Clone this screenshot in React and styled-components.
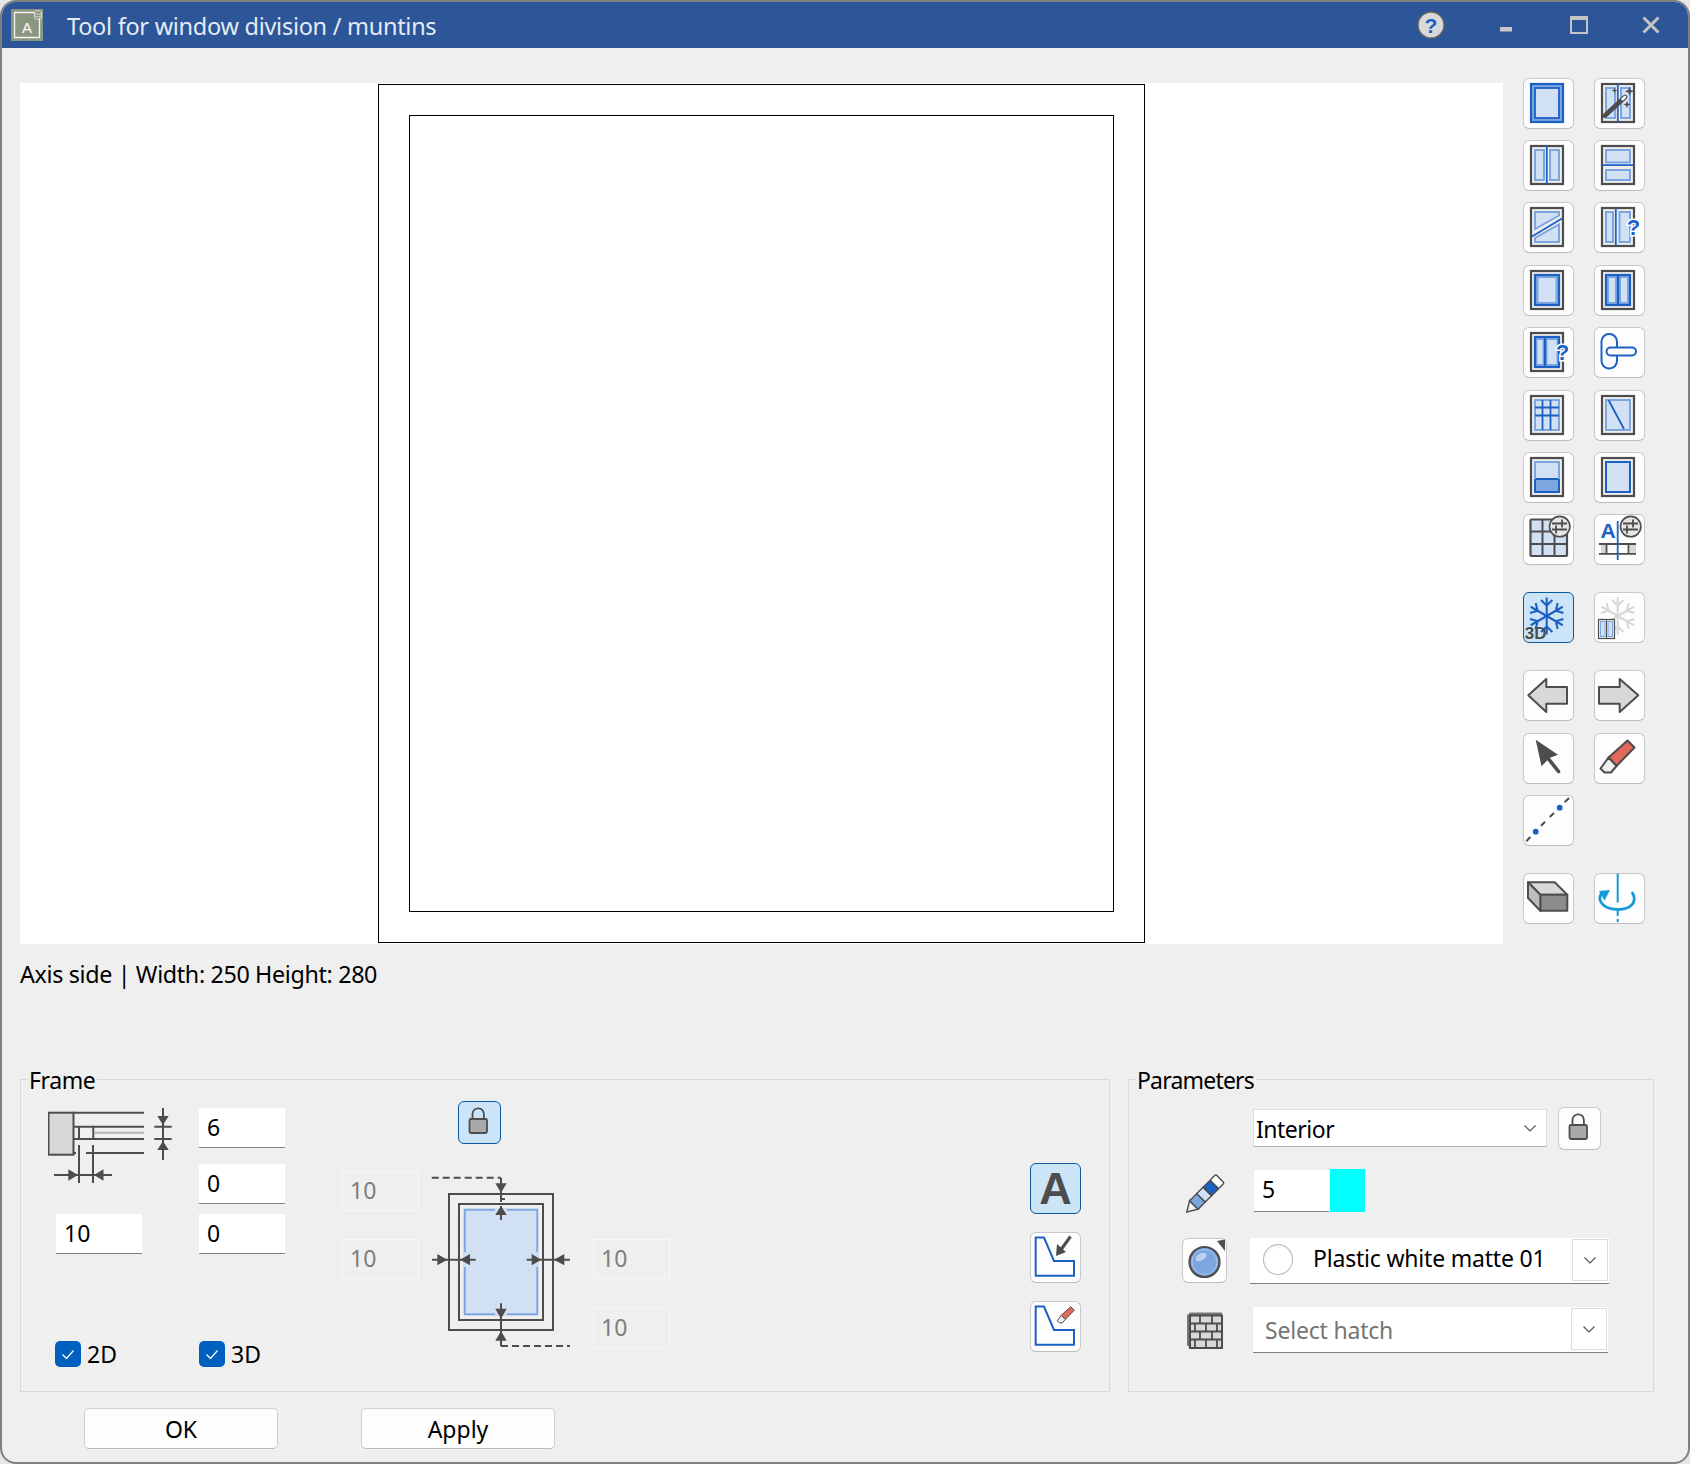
import React from 'react'
import styled, { createGlobalStyle } from 'styled-components'

const BLUE = '#1d60c4'
const MID = '#7ca6e0'
const LIGHT = '#d2e0f3'
const DARK = '#4d4d4d'
const GREY = '#d8d8d8'
const UI_FONT = '"Noto Sans", "Open Sans", sans-serif'

const Global = createGlobalStyle`
  html, body { margin: 0; padding: 0; background: #e6e6e6; }
  body { font-family: ${UI_FONT}; color: #000; }
`

const Window = styled.div`
  box-sizing: border-box;
  width: 1690px;
  height: 1464px;
  background: #efefef;
  border: 2px solid #808080;
  border-radius: 16px;
  overflow: hidden;
  display: flex;
  flex-direction: column;
`

const TitleBar = styled.header`
  height: 46px;
  flex: none;
  background: #2c5697;
  display: flex;
  align-items: center;
  padding-left: 9px;
  color: #e4ebf5;
`

const Title = styled.div`
  font-size: 23.5px;
  margin: 2px 0 0 24px;
  letter-spacing: -0.28px;
  flex: 1;
`

const TitleGlyph = styled.div`
  margin-left: ${p => p.$gap}px;
  margin-right: ${p => p.$end || 0}px;
`

const Content = styled.main`
  flex: 1;
  display: flex;
  flex-direction: column;
  padding: 30px 0 0 18px;
`

const TopRow = styled.div`
  display: flex;
  align-items: flex-start;
  gap: 20px;
  height: 866px;
`

const Canvas = styled.div`
  width: 1483px;
  height: 861px;
  margin-top: 5px;
  background: #fff;
  display: flex;
  justify-content: center;
`

const OuterSheet = styled.div`
  box-sizing: border-box;
  width: 767px;
  height: 859px;
  margin-top: 1px;
  margin-left: -1px;
  border: 1px solid #000;
  display: flex;
  align-items: center;
  justify-content: center;
`

const InnerSheet = styled.div`
  box-sizing: border-box;
  width: 705px;
  height: 797px;
  border: 1px solid #000;
`

const ToolGrid = styled.div`
  display: grid;
  grid-template-columns: 51px 51px;
  column-gap: 20px;
  grid-template-rows: 62px 62px 63px 62px 63px 62px 62px 78px 78px 63px 62px 78px 51px;
  align-items: start;
`

const IconButton = styled.button`
  box-sizing: border-box;
  width: ${p => p.$size || 51}px;
  height: ${p => p.$size || 51}px;
  padding: 0;
  display: block;
  border: 1px solid ${p => (p.$active ? '#0a5aa0' : '#c8c8c8')};
  border-bottom-color: ${p => (p.$active ? '#0a5aa0' : '#bcbcbc')};
  border-radius: 6px;
  background: ${p => (p.$active ? '#cce4f7' : '#fdfdfd')};
  overflow: visible;
  svg { display: block; margin: -1px; overflow: visible; }
`

const StatusLine = styled.div`
  font-size: 23.3px;
  letter-spacing: -0.35px;
  line-height: 32px;
  margin-top: 14px;
  height: 121px;
`

const Panels = styled.div`
  display: flex;
  gap: 18px;
`

const Panel = styled.section`
  position: relative;
  box-sizing: border-box;
  width: ${p => p.$width}px;
  height: 313px;
  border: 1px solid #d9d9d9;
  display: flex;
  padding-top: ${p => p.$top}px;
`

const Legend = styled.div`
  position: absolute;
  left: 6px;
  top: -15px;
  padding: 0 2px;
  background: #efefef;
  font-size: 23px;
  letter-spacing: ${p => p.$tracking}px;
  line-height: 30px;
`

const FieldsColumn = styled.div`
  display: grid;
  grid-template-columns: 151px 86px;
  grid-template-rows: 56px 50px 126px 26px;
  align-items: start;
  margin-left: 27px;
  padding-top: 7px;
  height: 258px;
`

const ProfileSlot = styled.div`
  grid-column: 1;
  grid-row: 1 / span 2;
`

const Field = styled.div`
  box-sizing: border-box;
  width: ${p => p.$width || 86}px;
  height: ${p => p.$height || 40}px;
  margin-left: ${p => p.$left || 0}px;
  background: #fff;
  border-bottom: 1px solid #808080;
  font-size: 23px;
  line-height: 38px;
  padding-left: 8px;
  grid-column: ${p => p.$col};
  grid-row: ${p => p.$row};
`

const MutedField = styled.div`
  box-sizing: border-box;
  width: 77px;
  height: 40px;
  border: 1px solid #f8f8f8;
  font-size: 23px;
  line-height: 36px;
  padding-left: 7px;
  color: #7d7d7d;
  grid-column: ${p => p.$col};
  grid-row: ${p => p.$row};
`

const Check = styled.label`
  display: flex;
  align-items: center;
  gap: 6px;
  font-size: 23px;
  line-height: 26px;
  margin-left: ${p => p.$left || 0}px;
  margin-top: 1px;
  grid-column: ${p => p.$col};
  grid-row: 4;
`

const CheckBox = styled.span`
  width: 26px;
  height: 26px;
  border-radius: 5px;
  background: #0060c0;
  display: flex;
  align-items: center;
  justify-content: center;
`

const OffsetColumn = styled.div`
  display: grid;
  grid-template-columns: 88px 163px 77px;
  grid-template-rows: 70px 68px 69px 40px;
  align-items: start;
  margin-left: 57px;
  height: 247px;
`

const LockSlot = styled.div`
  grid-column: 2;
  grid-row: 1;
  margin-left: 28px;
`

const DiagramSlot = styled.div`
  grid-column: 2;
  grid-row: 2 / span 3;
  margin-top: 4px;
`

const TextStyleColumn = styled.div`
  display: flex;
  flex-direction: column;
  gap: 18px;
  margin-left: auto;
  margin-right: 28px;
  padding-top: 62px;
`

const BoldA = styled.span`
  display: block;
  font-family: "Liberation Sans", sans-serif;
  font-weight: 700;
  font-size: 45px;
  line-height: 47px;
  color: ${DARK};
  text-align: center;
`

const ParamsGrid = styled.div`
  display: grid;
  grid-template-columns: 68px 360px;
  grid-template-rows: 62px 69px 69px 46px;
  align-items: start;
  margin-left: 53px;
`

const LayerRow = styled.div`
  display: flex;
  align-items: flex-start;
  gap: 11px;
  margin-left: 3px;
  grid-column: 2;
  grid-row: 1;
`

const Select = styled.div`
  box-sizing: border-box;
  width: 294px;
  height: 38px;
  margin-top: 2px;
  background: #fff;
  border: 1px solid #dedede;
  border-bottom-color: #b4b4b4;
  display: flex;
  align-items: center;
  justify-content: space-between;
  font-size: 23px;
  line-height: 38px;
  letter-spacing: -0.5px;
  padding: 1px 9px 0 2px;
`

const PenRow = styled.div`
  display: flex;
  margin: 1px 0 0 4px;
  grid-column: 2;
  grid-row: 2;
`

const ColorChip = styled.div`
  width: 35px;
  height: 43px;
  margin: -1px 0 0 1px;
  background: #00ffff;
`

const Picker = styled.div`
  box-sizing: border-box;
  width: ${p => p.$width}px;
  height: 46px;
  margin-left: ${p => p.$left || 0}px;
  background: #fff;
  border-bottom: 1px solid #808080;
  display: flex;
  align-items: center;
  font-size: 23px;
  letter-spacing: -0.2px;
  color: ${p => (p.$muted ? '#757575' : '#000')};
  padding-left: ${p => p.$pad}px;
  grid-column: 2;
  grid-row: ${p => p.$row};
`

const PickerLabel = styled.span`
  margin-bottom: 6px;
`

const PickerArrow = styled.div`
  box-sizing: border-box;
  width: 36px;
  height: 42px;
  margin-left: auto;
  margin-right: 1px;
  margin-bottom: 1px;
  border: 1px solid #dcdcdc;
  display: flex;
  align-items: center;
  justify-content: center;
`

const Swatch = styled.span`
  width: 30px;
  height: 31px;
  margin: 0 20px 2px 0;
  border-radius: 50%;
  border: 1px solid #b8b8b8;
  box-sizing: border-box;
  background: radial-gradient(circle at 55% 55%, #fff 55%, #e4e4e4 100%);
`

const IconSlot = styled.div`
  margin-left: ${p => p.$left || 0}px;
  margin-top: ${p => p.$top || 0}px;
  grid-column: 1;
  grid-row: ${p => p.$row};
`

const Footer = styled.footer`
  display: flex;
  gap: 83px;
  margin: 16px 0 0 64px;
`

const DialogButton = styled.button`
  box-sizing: border-box;
  width: 194px;
  height: 41px;
  padding: 0;
  background: #fdfdfd;
  border: 1px solid #d0d0d0;
  border-bottom-color: #b8b8b8;
  border-radius: 5px;
  font-family: ${UI_FONT};
  font-size: 23px;
  line-height: 38px;
  color: #000;
`

// ---- small drawings

const Tool = ({ children, size = 51 }) => (
  <svg width={size} height={size} viewBox={`0 0 ${size} ${size}`}>{children}</svg>
)

const Box = ({ x = 8, y = 6, w = 32, h = 38 }) => (
  <rect x={x} y={y} width={w} height={h} fill="#eee" stroke={DARK} strokeWidth="2.2" />
)

const Pane = ({ x, y, w, h, stroke = MID, fill = LIGHT, sw = 2 }) => (
  <rect x={x} y={y} width={w} height={h} fill={fill} stroke={stroke} strokeWidth={sw} />
)

const Quest = ({ x = 39.5, y = 33 }) => (
  <text x={x} y={y} textAnchor="middle" fontFamily="Liberation Sans, sans-serif" fontWeight="700" fontSize="22" fill={BLUE} stroke="#fff" strokeWidth="3" paintOrder="stroke">?</text>
)

const Sliders = () => (
  <g>
    <circle cx="36.7" cy="12.6" r="10.2" fill="#e6e6e6" stroke={DARK} strokeWidth="1.6" />
    <path d="M29 9.5h15M29 15.5h15M39 5.5v8M33 11.5v8" stroke={DARK} strokeWidth="1.8" fill="none" />
  </g>
)

const Flake = ({ color, strokeW = 2.1 }) => {
  const arm = 'M23.7 24V5.5M18 8l5.700 5.500 5.700-5.500'
  return (
    <g stroke={color} strokeWidth={strokeW} fill="none">
      {[0, 60, 120, 180, 240, 300].map(a => (
        <path key={a} d={arm} transform={`rotate(${a} 23.7 24)`} />
      ))}
    </g>
  )
}

const Arrow = ({ points }) => <polygon points={points} fill={DARK} />

const windowIcons = [
  <Tool>
    <rect x="8" y="6" width="32" height="38" fill={MID} stroke={BLUE} strokeWidth="2.2" />
    <rect x="12" y="10" width="24" height="30" fill={LIGHT} stroke={BLUE} strokeWidth="1.8" />
  </Tool>,
  <Tool>
    <Box />
    <Pane x="12" y="10" w="9" h="30" />
    <Pane x="27" y="10" w="9" h="30" />
    <path d="M23.8 6v38" stroke={BLUE} strokeWidth="1.8" />
    <path d="M11 37.5L31 19" stroke={DARK} strokeWidth="4.8" strokeLinecap="round" />
    <path d="M28.5 21.2l2.500-2.300" stroke="#fff" strokeWidth="2.6" strokeLinecap="round" />
    <path d="M35.5 8.5l1.2 3.6 3.6 1.2-3.6 1.2-1.2 3.6-1.2-3.6-3.6-1.2 3.6-1.2zM33 23l1 2.6 2.6 1-2.6 1-1 2.6-1-2.6-2.6-1 2.6-1zM20.5 9.5l.7 2.3 2.3.7-2.3.7-.7 2.3-.7-2.3-2.3-.7 2.3-.7z" fill={DARK} />
  </Tool>,
  <Tool>
    <Box />
    <Pane x="12" y="10" w="9" h="30" />
    <Pane x="27" y="10" w="9" h="30" />
    <path d="M23.8 6v38" stroke={BLUE} strokeWidth="1.8" />
  </Tool>,
  <Tool>
    <Box />
    <Pane x="12" y="10" w="24" h="12.5" />
    <Pane x="12" y="30" w="24" h="10" />
    <path d="M8 25.2h32" stroke={BLUE} strokeWidth="1.8" />
  </Tool>,
  <Tool>
    <Box />
    <polygon points="12,10 36,10 36,13.5 12,27" fill={LIGHT} stroke={MID} strokeWidth="2" />
    <polygon points="36,22.5 36,40 12,40 12,36" fill={LIGHT} stroke={MID} strokeWidth="2" />
    <path d="M9 34.5L39 16.5" stroke={BLUE} strokeWidth="1.8" />
  </Tool>,
  <Tool>
    <Box />
    <Pane x="12" y="10" w="7" h="30" />
    <Pane x="25.5" y="10" w="10.5" h="30" />
    <path d="M21.8 6v38" stroke={BLUE} strokeWidth="1.8" />
    <Quest />
  </Tool>,
  <Tool>
    <Box />
    <rect x="12" y="10" width="24" height="30" fill={MID} stroke={BLUE} strokeWidth="2.2" />
    <rect x="15.5" y="13" width="17" height="24" fill={LIGHT} />
  </Tool>,
  <Tool>
    <Box />
    <rect x="12" y="10" width="24" height="30" fill={MID} stroke={BLUE} strokeWidth="2.2" />
    <rect x="15" y="13" width="6" height="24" fill={LIGHT} />
    <rect x="27" y="13" width="6" height="24" fill={LIGHT} />
    <path d="M24 10v30" stroke={BLUE} strokeWidth="2.2" />
  </Tool>,
  <Tool>
    <Box />
    <rect x="12" y="10" width="24" height="30" fill={MID} stroke={BLUE} strokeWidth="2.2" />
    <rect x="14.5" y="13" width="5" height="24" fill={LIGHT} />
    <rect x="24.5" y="13" width="9" height="24" fill={LIGHT} />
    <path d="M22 10v30" stroke={BLUE} strokeWidth="2.2" />
    <Quest />
  </Tool>,
  <Tool>
    <rect x="7.5" y="7" width="15.5" height="34.5" rx="7.5" fill="#fdfdfd" stroke={BLUE} strokeWidth="2" />
    <rect x="12.5" y="20.5" width="29.5" height="8" rx="4" fill="#fdfdfd" stroke={BLUE} strokeWidth="2" />
  </Tool>,
  <Tool>
    <Box />
    <Pane x="12" y="10" w="24" h="30" />
    <path d="M19.5 10v30M27.5 10v30M12 17.5h24M12 25.5h24" stroke={BLUE} strokeWidth="1.8" />
  </Tool>,
  <Tool>
    <Box />
    <Pane x="12" y="10" w="24" h="30" />
    <path d="M14.5 10L30 39" stroke={BLUE} strokeWidth="1.8" />
  </Tool>,
  <Tool>
    <Box />
    <Pane x="12" y="10" w="24" h="17" />
    <rect x="12" y="27" width="24" height="13" fill={MID} stroke={BLUE} strokeWidth="2" />
    <path d="M12 10v17M36 10v17" stroke={MID} strokeWidth="2" />
  </Tool>,
  <Tool>
    <Box />
    <Pane x="12" y="10" w="24" h="30" stroke={BLUE} />
  </Tool>,
  <Tool>
    <rect x="7.5" y="5.5" width="36.5" height="36.5" rx="1" fill={LIGHT} stroke={DARK} strokeWidth="2.2" />
    <path d="M19.5 5.5v36.5M31.5 5.5v36.5M7.5 17.5h36.5M7.5 30h36.5" stroke={DARK} strokeWidth="2" />
    <Sliders />
  </Tool>,
  <Tool>
    <rect x="7" y="30" width="35" height="10" fill={GREY} />
    <rect x="12" y="30" width="24" height="10" fill="#fdfdfd" />
    <path d="M5 30h37M5 39.8h37M12.5 30v10M34.5 30v10" stroke={DARK} strokeWidth="1.8" />
    <text x="14" y="24" textAnchor="middle" fontFamily="Liberation Sans, sans-serif" fontWeight="700" fontSize="21" fill={BLUE}>A</text>
    <path d="M23.7 7v39" stroke={BLUE} strokeWidth="1.8" />
    <Sliders />
  </Tool>,
]

const freeze3d = (
  <Tool>
    <Flake color={BLUE} />
    <text x="1.700" y="47" fontFamily="Liberation Sans, sans-serif" fontWeight="700" fontSize="17" fill={DARK}>3D</text>
  </Tool>
)

const freezeWindow = (
  <Tool>
    <Flake color="#d8d8d8" />
    <rect x="4.5" y="27.5" width="16" height="19" fill="#eee" stroke={DARK} strokeWidth="1.2" />
    <rect x="6.5" y="29.5" width="4.5" height="15" fill={LIGHT} stroke={MID} strokeWidth="1" />
    <rect x="14" y="29.5" width="4.5" height="15" fill={LIGHT} stroke={MID} strokeWidth="1" />
    <path d="M12.5 27.5v19" stroke={DARK} strokeWidth="1" />
  </Tool>
)

const eraser = (
  <g strokeLinejoin="round">
    <polygon points="33.5,7.5 40.5,14.5 22.5,33 14.5,24.5" fill="#e2695a" stroke={DARK} strokeWidth="2" />
    <path d="M14.5 24.5L22.5 33L17 39.5H10.5L6.5 35.5z" fill="#eee" stroke={DARK} strokeWidth="2" />
  </g>
)

const navIcons = [
  <Tool><polygon points="5.3,25.3 23.3,9 23.3,17 44,17 44,33.7 23.3,33.7 23.3,42" fill={GREY} stroke={DARK} strokeWidth="2" strokeLinejoin="round" /></Tool>,
  <Tool><polygon points="5,17 25.7,17 25.7,9 44.3,25.3 25.7,42 25.7,33.7 5,33.7" fill={GREY} stroke={DARK} strokeWidth="2" strokeLinejoin="round" /></Tool>,
  <Tool>
    <polygon points="12.7,6.7 35,21.7 26.5,25 18.5,33.3" fill={DARK} />
    <path d="M24 24l11.5 14.5" stroke={DARK} strokeWidth="3.6" strokeLinecap="round" />
  </Tool>,
  <Tool>{eraser}</Tool>,
  <Tool>
    <path d="M3.3 46.300L7.300 42M18 30.700L22 26.700M26.700 22L31 18M41.700 7.300L46 3" stroke={DARK} strokeWidth="2" />
    <circle cx="36.7" cy="12.7" r="2.9" fill={BLUE} />
    <circle cx="12.7" cy="36.7" r="2.9" fill={BLUE} />
  </Tool>,
  null,
  <Tool>
    <polygon points="5,9.3 31.7,9.3 44.3,21.7 17.3,21.7" fill={GREY} stroke={DARK} strokeWidth="2" strokeLinejoin="round" />
    <polygon points="17.3,21.7 44.3,21.7 44.3,37.7 17.3,37.7" fill="#8c8c8c" stroke={DARK} strokeWidth="2" strokeLinejoin="round" />
    <polygon points="5,9.3 17.3,21.7 17.3,37.7 5,25" fill="#bdbdbd" stroke={DARK} strokeWidth="2" strokeLinejoin="round" />
  </Tool>,
  <Tool>
    <path d="M23.7 0.5v29M23.7 36v7M23.7 46v3" stroke="#149ad6" strokeWidth="2" />
    <path d="M7 21c-4 8 4 15.500 17 15.500S43.500 29 38.500 20" fill="none" stroke="#149ad6" strokeWidth="2.800" strokeLinecap="round" />
    <polygon points="5,18 16,17 10.500,27.500" fill="#149ad6" />
  </Tool>,
]

const CornerShape = () => (
  <path d="M5.700 5.500H14L24 29H44V43.700H5.700z" fill="#fdfdfd" stroke={BLUE} strokeWidth="2" />
)

const ProfileIcon = () => (
  <svg width="124" height="76" viewBox="0 0 124 76">
    <rect x="0.500" y="4.700" width="25" height="42" fill={GREY} stroke={DARK} strokeWidth="2" />
    <g stroke={DARK} strokeWidth="2" fill="none">
      <path d="M25 4.700h71M25 18.700h71M25 31h71M38 45h58M25 45h3M31 18.700v12.300M45.300 18.700v12.300M31 37v38M45 37v38" />
      <path d="M6 67h58M115 0v52M106.300 18.700h17.400M106.300 31h17.400" />
    </g>
    <path d="M46 24.700h50" stroke="#b4b4b4" strokeWidth="2" />
    <Arrow points="20.300,61.300 30,67 20.300,72.700" />
    <Arrow points="55.500,61.300 46,67 55.500,72.700" />
    <Arrow points="109.300,8 120.700,8 115,17" />
    <Arrow points="109.300,42 120.700,42 115,33" />
  </svg>
)

const OffsetDiagram = () => (
  <svg width="142" height="173" viewBox="0 0 142 173">
    <rect x="34.700" y="34.700" width="72.600" height="104.600" fill={LIGHT} stroke={MID} strokeWidth="2" />
    <path d="M34.700 77v15M107.300 77v15M65 34.700h12M65 139.300h12" stroke={LIGHT} strokeWidth="2.400" />
    <g fill="none" stroke={DARK} strokeWidth="2">
      <rect x="19" y="19" width="104" height="136" />
      <rect x="29" y="29" width="84" height="116" />
      <path d="M1.700 2.700H71" strokeDasharray="7 4" />
      <path d="M71 171H140" strokeDasharray="7 4" />
      <path d="M71 3v24M71 31v14M71 128.300v43M2 84.700h43.700M96.700 84.700H140" />
      <path d="M71 24h4" />
    </g>
    <Arrow points="65.300,8.300 76.700,8.300 71,17.700" />
    <Arrow points="65.300,40 76.700,40 71,30.700" />
    <Arrow points="7.300,79 7.300,90.300 17.300,84.700" />
    <Arrow points="40,79 40,90.300 30,84.700" />
    <Arrow points="101.700,79 101.700,90.300 111.300,84.700" />
    <Arrow points="134.300,79 134.300,90.300 124,84.700" />
    <Arrow points="65.300,133.700 76.700,133.700 71,143.700" />
    <Arrow points="65.300,165.700 76.700,165.700 71,156" />
  </svg>
)

const Lock = ({ size }) => (
  <svg width={size} height={size} viewBox="0 0 43 43">
    <path d="M14.500 18v-5a5.700 5.700 0 0 1 11.400 0v5" fill="none" stroke={DARK} strokeWidth="1.800" />
    <rect x="11.500" y="18" width="17.500" height="14" rx="1.500" fill="#a9a9a9" stroke={DARK} strokeWidth="1.800" />
  </svg>
)

const Chevron = () => (
  <svg width="14" height="9" viewBox="0 0 14 9">
    <path d="M1.500 1.500L7 7l5.500-5.500" fill="none" stroke="#555" strokeWidth="1.200" />
  </svg>
)

const Pencil = () => (
  <svg width="40" height="41" viewBox="0 0 40 41" style={{ display: 'block' }}>
    <g transform="translate(0.800 40) rotate(-45)" stroke={DARK} strokeWidth="1.400">
      <polygon points="0,0 10,-6 10,6" fill="#f2f2f2" />
      <rect x="10" y="-6" width="10" height="12" fill={MID} />
      <rect x="20" y="-6" width="9" height="12" fill={LIGHT} />
      <rect x="29" y="-6" width="10" height="12" fill={BLUE} />
      <rect x="39" y="-6" width="8" height="12" rx="1.500" fill="#fff" />
    </g>
  </svg>
)

const MaterialIcon = () => (
  <svg width="45" height="45" viewBox="0 0 45 45">
    <polygon points="35,3 43,1.500 43,13" fill={DARK} />
    <circle cx="22.500" cy="24" r="15" fill={MID} stroke={DARK} strokeWidth="2.200" />
    <ellipse cx="19" cy="19" rx="6" ry="3.500" fill="#b9d0f0" transform="rotate(-30 19 19)" />
    <circle cx="22.500" cy="24" r="12.500" fill="none" stroke="#a8c4ec" strokeWidth="1" />
  </svg>
)

const HatchIcon = () => (
  <svg width="37" height="37" viewBox="0 0 37 37" style={{ display: 'block' }}>
    <polygon points="1,3.500 4,0.500 36,0.500 36,36 4,36 1,33" fill="#777" />
    <rect x="4" y="3.500" width="32" height="32.500" fill={GREY} stroke={DARK} strokeWidth="2" />
    <path d="M4 11.500h32M4 19.500h32M4 27.500h32M14 3.500v8M26 3.500v8M9 11.500v8M20 11.500v8M31 11.500v8M14 19.500v8M26 19.500v8M9 27.500v8M20 27.500v8M31 27.500v8" stroke={DARK} strokeWidth="1.800" fill="none" />
  </svg>
)

const CheckMark = () => (
  <svg width="14" height="11" viewBox="0 0 14 11">
    <path d="M1.500 5.500L5.500 9.500L12.500 1.500" fill="none" stroke="#fff" strokeWidth="1.200" />
  </svg>
)

const AppIcon = () => (
  <svg width="32" height="32" viewBox="0 0 32 32" style={{ flex: 'none' }}>
    <rect width="32" height="32" fill="#8a9680" />
    <path d="M23 3.500H3.500V28.500H28.500V9" fill="none" stroke="#f2f2f2" strokeWidth="1.400" />
    <text x="16" y="23.500" textAnchor="middle" fontFamily="Liberation Sans, sans-serif" fontSize="15" fill="#fff">A</text>
    <ellipse cx="27" cy="3.500" rx="3.500" ry="1.800" fill="none" stroke="#e8e8e8" strokeWidth="0.800" />
    <path d="M23.500 3.500v5c0 2.400 7 2.400 7 0v-5M23.500 6c0 2.400 7 2.400 7 0" fill="none" stroke="#e8e8e8" strokeWidth="0.800" />
  </svg>
)

const HelpIcon = () => (
  <svg width="28" height="28" viewBox="0 0 28 28" style={{ display: 'block' }}>
    <circle cx="14" cy="14" r="13" fill="#d9d9d9" stroke="#666" strokeWidth="1.400" />
    <text x="14" y="21.500" textAnchor="middle" fontFamily="Liberation Sans, sans-serif" fontWeight="700" fontSize="21" fill={BLUE}>?</text>
  </svg>
)

const MinimizeIcon = () => (
  <svg width="12" height="24" viewBox="0 0 12 24" style={{ display: 'block' }}>
    <rect x="0" y="14" width="12" height="4.500" fill="#c8c8c8" />
  </svg>
)

const MaximizeIcon = () => (
  <svg width="18" height="18" viewBox="0 0 18 18" style={{ display: 'block' }}>
    <path d="M1 3h16M1 1h16v16H1z" fill="none" stroke="#c4c4c4" strokeWidth="2" />
  </svg>
)

const CloseIcon = () => (
  <svg width="18" height="18" viewBox="0 0 18 18" style={{ display: 'block' }}>
    <path d="M1.500 1.500l15 15M16.500 1.500l-15 15" fill="none" stroke="#c4c4c4" strokeWidth="3" />
  </svg>
)

export default function App() {
  return (
    <>
      <Global />
      <Window>
        <TitleBar>
          <AppIcon />
          <Title>Tool for window division / muntins</Title>
          <TitleGlyph $gap={0}><HelpIcon /></TitleGlyph>
          <TitleGlyph $gap={55}><MinimizeIcon /></TitleGlyph>
          <TitleGlyph $gap={58}><MaximizeIcon /></TitleGlyph>
          <TitleGlyph $gap={54} $end={28}><CloseIcon /></TitleGlyph>
        </TitleBar>
        <Content>
          <TopRow>
            <Canvas>
              <OuterSheet>
                <InnerSheet />
              </OuterSheet>
            </Canvas>
            <ToolGrid>
              {windowIcons.map((icon, i) => (
                <IconButton key={i}>{icon}</IconButton>
              ))}
              <IconButton $active>{freeze3d}</IconButton>
              <IconButton>{freezeWindow}</IconButton>
              {navIcons.map((icon, i) => (
                icon ? <IconButton key={i}>{icon}</IconButton> : <span key={i} />
              ))}
            </ToolGrid>
          </TopRow>
          <StatusLine>Axis side | Width: 250 Height: 280</StatusLine>
          <Panels>
            <Panel $width={1090} $top={21}>
              <Legend $tracking={-0.4}>Frame</Legend>
              <FieldsColumn>
                <ProfileSlot><ProfileIcon /></ProfileSlot>
                <Field $col={2} $row={1}>6</Field>
                <Field $col={2} $row={2}>0</Field>
                <Field $col={1} $row={3} $left={8}>10</Field>
                <Field $col={2} $row={3}>0</Field>
                <Check $col={1} $left={7}><CheckBox><CheckMark /></CheckBox>2D</Check>
                <Check $col={2}><CheckBox><CheckMark /></CheckBox>3D</Check>
              </FieldsColumn>
              <OffsetColumn>
                <LockSlot>
                  <IconButton $size={43} $active><Lock size={43} /></IconButton>
                </LockSlot>
                <MutedField $col={1} $row={2}>10</MutedField>
                <MutedField $col={1} $row={3}>10</MutedField>
                <DiagramSlot><OffsetDiagram /></DiagramSlot>
                <MutedField $col={3} $row={3}>10</MutedField>
                <MutedField $col={3} $row={4}>10</MutedField>
              </OffsetColumn>
              <TextStyleColumn>
                <IconButton $active><BoldA>A</BoldA></IconButton>
                <IconButton>
                  <Tool>
                    <CornerShape />
                    <path d="M40.500 4.500L30 19" stroke={DARK} strokeWidth="3" />
                    <polygon points="26,24 27,12 36,20" fill={DARK} />
                  </Tool>
                </IconButton>
                <IconButton>
                  <Tool>
                    <CornerShape />
                    <g transform="translate(24 2) scale(0.5)">{eraser}</g>
                  </Tool>
                </IconButton>
              </TextStyleColumn>
            </Panel>
            <Panel $width={526} $top={27}>
              <Legend $tracking={-0.8}>Parameters</Legend>
              <ParamsGrid>
                <LayerRow>
                  <Select>Interior<Chevron /></Select>
                  <IconButton $size={43}><Lock size={43} /></IconButton>
                </LayerRow>
                <IconSlot $row={2} $left={4} $top={3}><Pencil /></IconSlot>
                <PenRow>
                  <Field $width={75} $height={42}>5</Field>
                  <ColorChip />
                </PenRow>
                <IconSlot $row={3}>
                  <IconButton $size={45}><MaterialIcon /></IconButton>
                </IconSlot>
                <Picker $width={359} $pad={13} $row={3}>
                  <Swatch /><PickerLabel>Plastic white matte 01</PickerLabel>
                  <PickerArrow><Chevron /></PickerArrow>
                </Picker>
                <IconSlot $row={4} $left={4} $top={5}><HatchIcon /></IconSlot>
                <Picker $width={355} $left={3} $pad={12} $row={4} $muted>
                  Select hatch
                  <PickerArrow><Chevron /></PickerArrow>
                </Picker>
              </ParamsGrid>
            </Panel>
          </Panels>
          <Footer>
            <DialogButton>OK</DialogButton>
            <DialogButton>Apply</DialogButton>
          </Footer>
        </Content>
      </Window>
    </>
  )
}
